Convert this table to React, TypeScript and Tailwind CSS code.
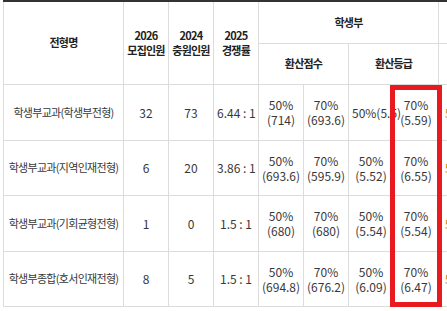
const rows = [
  {
    name: '학생부교과(학생부전형)',
    quota: '32',
    prev: '73',
    rate: '6.44 : 1',
    scoreA: ['50%', '(714)'],
    scoreB: ['70%', '(693.6)'],
    gradeA: ['50%(5.5)'],
    gradeB: ['70%', '(5.59)'],
  },
  {
    name: '학생부교과(지역인재전형)',
    quota: '6',
    prev: '20',
    rate: '3.86 : 1',
    scoreA: ['50%', '(693.6)'],
    scoreB: ['70%', '(595.9)'],
    gradeA: ['50%', '(5.52)'],
    gradeB: ['70%', '(6.55)'],
  },
  {
    name: '학생부교과(기회균형전형)',
    quota: '1',
    prev: '0',
    rate: '1.5 : 1',
    scoreA: ['50%', '(680)'],
    scoreB: ['70%', '(680)'],
    gradeA: ['50%', '(5.54)'],
    gradeB: ['70%', '(5.54)'],
  },
  {
    name: '학생부종합(호서인재전형)',
    quota: '8',
    prev: '5',
    rate: '1.5 : 1',
    scoreA: ['50%', '(694.8)'],
    scoreB: ['70%', '(676.2)'],
    gradeA: ['50%', '(6.09)'],
    gradeB: ['70%', '(6.47)'],
  },
]

const th = 'border border-[#dcdcdc] font-bold text-[11px] tracking-[-0.8px] text-[#222] text-center align-middle leading-[15px] px-[2px]'
const cell = 'border border-[#dcdcdc] text-[#383838] align-middle leading-[15px] px-[3px] whitespace-nowrap'
const td = cell + ' text-[12px] text-center'
const nameTd = cell + ' text-[11px] tracking-[-0.7px] text-center'

const Lines = ({ lines }: { lines: string[] }) => (
  <>
    {lines.map((l, i) => (
      <div key={i}>{l}</div>
    ))}
  </>
)

const App = () => {
  return (
    <div
      className="relative w-[447px] h-[311px] overflow-hidden bg-white"
      style={{ fontFamily: '"Noto Sans CJK KR", "Noto Sans", sans-serif' }}
    >
      <table className="ml-[3px] table-fixed border-collapse border-t-2 border-t-[#333] w-[540px]">
        <colgroup>
          <col className="w-[120px]" />
          <col className="w-[45px]" />
          <col className="w-[45px]" />
          <col className="w-[45px]" />
          <col className="w-[45px]" />
          <col className="w-[45px]" />
          <col className="w-[45px]" />
          <col className="w-[45px]" />
          <col className="w-[105px]" />
        </colgroup>
        <thead>
          <tr className="h-[42px]">
            <th rowSpan={2} className={th + ' border-t-0'}>전형명</th>
            <th rowSpan={2} className={th + ' border-t-0'}>
              2026
              <br />
              모집인원
            </th>
            <th rowSpan={2} className={th + ' border-t-0'}>
              2024
              <br />
              충원인원
            </th>
            <th rowSpan={2} className={th + ' border-t-0'}>
              2025
              <br />
              경쟁률
            </th>
            <th colSpan={4} className={th + ' border-t-0'}>학생부</th>
            <th className={th + ' border-t-0'}></th>
          </tr>
          <tr className="h-[41px]">
            <th colSpan={2} className={th}>환산점수</th>
            <th colSpan={2} className={th}>환산등급</th>
            <th className={th}></th>
          </tr>
        </thead>
        <tbody>
          {rows.map((r, i) => (
            <tr key={i} className={i % 2 === 0 ? 'h-[56px]' : 'h-[55px]'}>
              <td className={nameTd}>{r.name}</td>
              <td className={td}>{r.quota}</td>
              <td className={td}>{r.prev}</td>
              <td className={td}>{r.rate}</td>
              <td className={td}>
                <Lines lines={r.scoreA} />
              </td>
              <td className={td}>
                <Lines lines={r.scoreB} />
              </td>
              <td className={td}>
                <div className={r.gradeA.length === 1 ? 'text-left' : ''}>
                  <Lines lines={r.gradeA} />
                </div>
              </td>
              <td className={td}>
                <Lines lines={r.gradeB} />
              </td>
              <td className={cell + ' text-[12px] text-left pl-[6px] text-[#e07b00]'}>50%(5.5)</td>
            </tr>
          ))}
        </tbody>
      </table>
      <div className="absolute left-[390px] top-[85px] w-[52px] h-[222px] border-[5px] border-[#e8191f]" />
    </div>
  )
}

export default App
